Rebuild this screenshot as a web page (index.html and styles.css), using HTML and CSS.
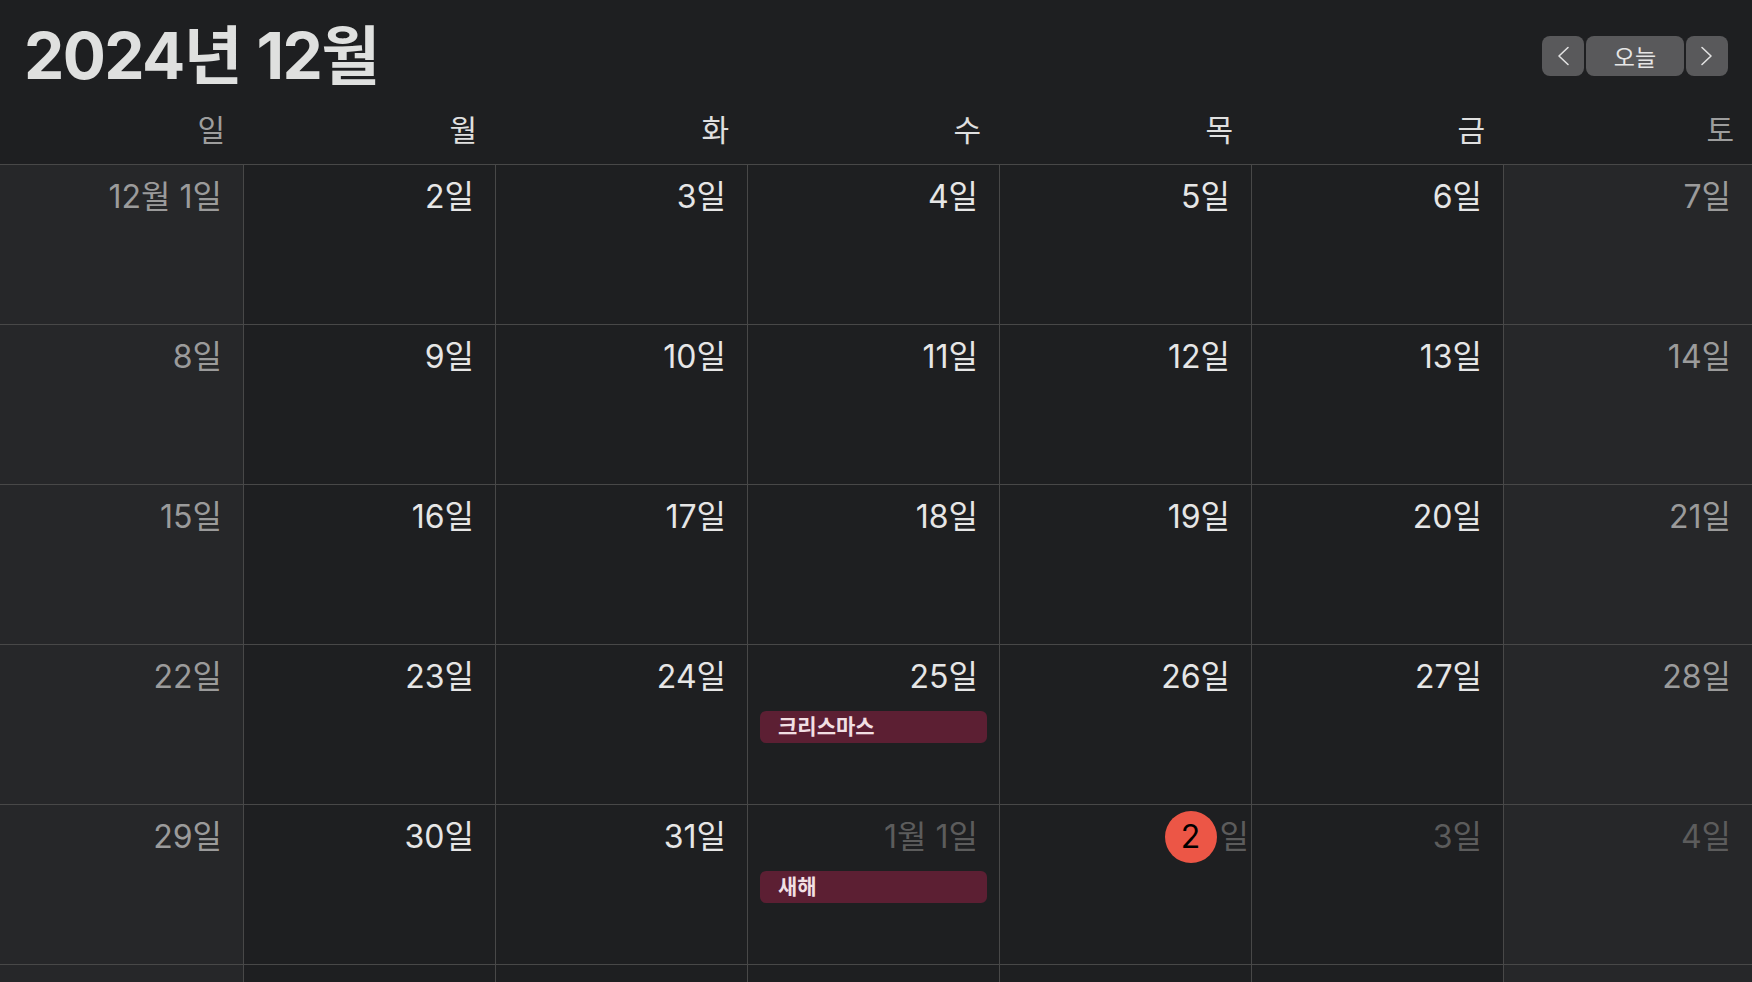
FILE: index.html
```html
<!DOCTYPE html>
<html lang="ko">
<head>
<meta charset="utf-8">
<title>2024년 12월</title>
<link rel="stylesheet" href="styles.css">
</head>
<body>
<div class="app">
  <header class="topbar">
    <h1 class="title">2024년 12월</h1>
    <div class="nav">
      <button class="navbtn" aria-label="이전">
        <svg width="14" height="20" viewBox="0 0 14 20"><polyline points="12,1.5 3,10 12,18.5" fill="none" stroke="#e2e2e2" stroke-width="1.6" stroke-linecap="round" stroke-linejoin="round"/></svg>
      </button>
      <button class="navbtn today-btn">오늘</button>
      <button class="navbtn" aria-label="다음">
        <svg width="14" height="20" viewBox="0 0 14 20"><polyline points="2,1.5 11,10 2,18.5" fill="none" stroke="#e2e2e2" stroke-width="1.6" stroke-linecap="round" stroke-linejoin="round"/></svg>
      </button>
    </div>
  </header>
  <div class="weekdays">
    <div class="wd weekend">일</div>
    <div class="wd">월</div>
    <div class="wd">화</div>
    <div class="wd">수</div>
    <div class="wd">목</div>
    <div class="wd">금</div>
    <div class="wd weekend">토</div>
  </div>
  <div class="grid">
    <div class="cell wkend"><div class="num dim">12월 1일</div></div>
    <div class="cell"><div class="num">2일</div></div>
    <div class="cell"><div class="num">3일</div></div>
    <div class="cell"><div class="num">4일</div></div>
    <div class="cell"><div class="num">5일</div></div>
    <div class="cell"><div class="num">6일</div></div>
    <div class="cell wkend"><div class="num dim">7일</div></div>

    <div class="cell wkend"><div class="num dim">8일</div></div>
    <div class="cell"><div class="num">9일</div></div>
    <div class="cell"><div class="num">10일</div></div>
    <div class="cell"><div class="num">11일</div></div>
    <div class="cell"><div class="num">12일</div></div>
    <div class="cell"><div class="num">13일</div></div>
    <div class="cell wkend"><div class="num dim">14일</div></div>

    <div class="cell wkend"><div class="num dim">15일</div></div>
    <div class="cell"><div class="num">16일</div></div>
    <div class="cell"><div class="num">17일</div></div>
    <div class="cell"><div class="num">18일</div></div>
    <div class="cell"><div class="num">19일</div></div>
    <div class="cell"><div class="num">20일</div></div>
    <div class="cell wkend"><div class="num dim">21일</div></div>

    <div class="cell wkend"><div class="num dim">22일</div></div>
    <div class="cell"><div class="num">23일</div></div>
    <div class="cell"><div class="num">24일</div></div>
    <div class="cell"><div class="num">25일</div><div class="event">크리스마스</div></div>
    <div class="cell"><div class="num">26일</div></div>
    <div class="cell"><div class="num">27일</div></div>
    <div class="cell wkend"><div class="num dim">28일</div></div>

    <div class="cell wkend"><div class="num dim">29일</div></div>
    <div class="cell"><div class="num">30일</div></div>
    <div class="cell"><div class="num">31일</div></div>
    <div class="cell"><div class="num other">1월 1일</div><div class="event">새해</div></div>
    <div class="cell"><div class="num other today"><span class="circle">2</span><span>일</span></div></div>
    <div class="cell"><div class="num other">3일</div></div>
    <div class="cell wkend"><div class="num other">4일</div></div>

    <div class="cell wkend"></div>
    <div class="cell"></div>
    <div class="cell"></div>
    <div class="cell"></div>
    <div class="cell"></div>
    <div class="cell"></div>
    <div class="cell wkend"></div>
  </div>
</div>
</body>
</html>
```
FILE: styles.css
```css
html, body {
  margin: 0;
  padding: 0;
  height: 100%;
  overflow: hidden;
  background: #1e1f21;
}

body {
  font-family: Inter, "Noto Sans CJK KR", sans-serif;
  color: #e4e4e4;
}

.app {
  width: 1752px;
  height: 982px;
  overflow: hidden;
}

.topbar {
  height: 112px;
  display: flex;
  align-items: center;
  justify-content: space-between;
  padding: 0 24px;
  box-sizing: border-box;
}

.title {
  margin: 0;
  font-size: 64px;
  font-weight: 700;
  line-height: 80px;
  color: #dfe0df;
  letter-spacing: -1.6px;
  word-spacing: 2px;
}

.nav {
  display: flex;
  gap: 2px;
}

.navbtn {
  width: 42px;
  height: 40px;
  border: 0;
  border-radius: 8px;
  background: #59595b;
  color: #e6e6e6;
  padding: 0;
  display: flex;
  align-items: center;
  justify-content: center;
  font-family: Inter, "Noto Sans CJK KR", sans-serif;
  font-size: 23px;
}

.today-btn {
  width: 98px;
}

.weekdays {
  height: 52px;
  display: grid;
  grid-template-columns: 243px repeat(5, 252px) 1fr;
}

.wd {
  text-align: right;
  padding-right: 18px;
  font-size: 30px;
  line-height: 36px;
  color: #e0e0e0;
}

.wd.weekend {
  color: #9d9d9d;
}

.grid {
  display: grid;
  grid-template-columns: 243px repeat(5, 252px) 1fr;
  grid-auto-rows: 160px;
}

.cell {
  border-top: 1px solid #484848;
  border-left: 1px solid #484848;
  box-sizing: border-box;
  background: #1e1f21;
}

.cell:nth-child(7n+1) {
  border-left: 0;
}

.cell.wkend {
  background: #262729;
}

.num {
  display: flex;
  justify-content: flex-end;
  align-items: center;
  padding: 14px 21px 0 0;
  height: 36px;
  font-size: 32px;
  line-height: 36px;
  color: #e6e6e6;
  white-space: pre;
}

.num.dim {
  color: #9b9b9b;
}

.num.other {
  color: #5c5c5c;
}

.num.today {
  padding-right: 2px;
  gap: 3px;
}

.circle {
  width: 52px;
  height: 52px;
  border-radius: 50%;
  background: #ec5646;
  color: #000;
  display: flex;
  align-items: center;
  justify-content: center;
  font-size: 32px;
}

.event {
  margin: 16px 12px 0 12px;
  height: 32px;
  border-radius: 6px;
  background: #5c1f33;
  padding-left: 18px;
  font-size: 21px;
  font-weight: 600;
  line-height: 32px;
  color: #f1dfe3;
}
```
